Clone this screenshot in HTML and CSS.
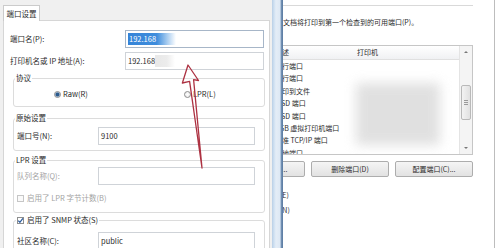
FILE: index.html
```html
<!DOCTYPE html>
<html lang="zh-CN">
<head>
<meta charset="utf-8">
<title>端口设置</title>
<link rel="stylesheet" href="styles.css">
</head>
<body>
<div class="desk">
  <section class="back">
    <div class="back-top"></div>
    <p class="back-desc">打印到下列端口。文档将打印到第一个检查到的可用端口(P)。</p>
    <div class="list">
      <div class="list-main">
        <div class="list-head"><span class="col1">描述</span><span class="col2">打印机</span></div>
        <div class="list-row"><span class="col1">串行端口</span></div>
        <div class="list-row"><span class="col1">串行端口</span></div>
        <div class="list-row"><span class="col1">打印到文件</span></div>
        <div class="list-row"><span class="col1">WSD 端口</span></div>
        <div class="list-row"><span class="col1">WSD 端口</span></div>
        <div class="list-row"><span class="col1">USB 虚拟打印机端口</span></div>
        <div class="list-row"><span class="col1">标准 TCP/IP 端口</span></div>
        <div class="list-row"><span class="col1">本地端口</span></div>
      </div>
      <div class="blurbox"></div>
      <div class="scroll">
        <div class="sb-btn"><span class="tri up"></span></div>
        <div class="sb-track"><div class="thumb"><i></i><i></i><i></i></div></div>
        <div class="sb-btn"><span class="tri down"></span></div>
      </div>
    </div>
    <div class="btns">
      <button class="btn">添加端口(T)...</button>
      <button class="btn">删除端口(D)</button>
      <button class="btn">配置端口(C)...</button>
    </div>
    <div class="opt"><span class="chk"></span><span>启用双向支持(E)</span></div>
    <div class="opt opt2"><span class="chk"></span><span>启用打印机池(N)</span></div>
  </section>

  <section class="dialog">
    <div class="dlg-body">
      <div class="tabs"><div class="tab">端口设置</div></div>
      <div class="page">
        <div class="row row-top">
          <span class="lbl">端口名(P):</span>
          <div class="inp inp-focus"><span class="sel">192.168</span></div>
        </div>
        <div class="row row-top">
          <span class="lbl">打印机名或 IP 地址(A):</span>
          <div class="inp"><span>192.168</span><span class="smudge"></span></div>
        </div>

        <fieldset class="grp g1">
          <legend>协议</legend>
          <div class="radios">
            <label class="rad rad-raw"><span class="radio on"></span>Raw(R)</label>
            <label class="rad"><span class="radio"></span>LPR(L)</label>
          </div>
        </fieldset>

        <fieldset class="grp g2">
          <legend>原始设置</legend>
          <div class="row">
            <span class="lbl2">端口号(N):</span>
            <div class="inp inp2">9100</div>
          </div>
        </fieldset>

        <fieldset class="grp g3">
          <legend>LPR 设置</legend>
          <div class="row">
            <span class="lbl2 dis">队列名称(Q):</span>
            <div class="inp inp2"></div>
          </div>
          <div class="chkrow dis"><span class="chk dis"></span>启用了 LPR 字节计数(B)</div>
        </fieldset>

        <fieldset class="grp g4">
          <legend class="leg-chk"><span class="chk on"><svg viewBox="0 0 7 7" width="7" height="7"><path d="M1.2 3.6 L2.9 5.3 L5.9 1.4" fill="none" stroke="#2b5c9e" stroke-width="1.3"/></svg></span>启用了 SNMP 状态(S)</legend>
          <div class="row">
            <span class="lbl2">社区名称(C):</span>
            <div class="inp inp2">public</div>
          </div>
        </fieldset>
      </div>
    </div>
    <div class="dlg-edge"></div>
  </section>

  <svg class="arrow" width="500" height="248" viewBox="0 0 500 248">
    <path d="M188 65 L198.5 80.5 L193.6 79.6 L202 168 L189.6 81.4 L182.4 83 Z" fill="rgba(255,255,255,0.15)" stroke="#ad3242" stroke-width="1.3" stroke-linejoin="round"/>
  </svg>
</div>
</body>
</html>
```
FILE: styles.css
```css
* { box-sizing: border-box; }
html, body { margin: 0; padding: 0; }
body {
  width: 500px; height: 248px; overflow: hidden; background: #fff;
  font-family: "Noto Sans CJK SC", "Liberation Sans", sans-serif;
  color: #2a2a2a;
}
.desk { position: relative; width: 500px; height: 248px; overflow: hidden; }

/* back window */
.back {
  position: absolute; left: 200px; top: 0; width: 295px; height: 248px;
  background: #fff; border-right: 1px solid #bdbdbd;
  font-size: 7px; line-height: 10px;
}
.back-top { height: 6px; border-bottom: 1px solid #d9d9d9; margin-right: 21px; }
.back-desc { margin: 11px 0 0 27px; white-space: nowrap; }
.list {
  position: relative; display: flex;
  margin: 18px 21px 0 71px; height: 110px;
  border: 1px solid #c6c6c6; overflow: hidden;
}
.list-main { flex: 1; overflow: hidden; }
.list-head {
  display: flex; height: 14px; line-height: 13px;
  border-bottom: 1px solid #e0e0e0;
  background: linear-gradient(#ffffff, #f0f1f3);
}
.col1 { width: 76px; padding-left: 3px; white-space: nowrap; flex: none; }
.col2 { flex: 1; padding-left: 9px; }
.list-row { display: flex; height: 12.4px; line-height: 12.4px; }
.blurbox {
  position: absolute; left: 84px; top: 37px; width: 84px; height: 62px;
  background: #d9d9d9; filter: blur(6px); opacity: 0.8;
}
.scroll {
  width: 13px; border-left: 1px solid #e4e4e4; background: #f4f4f4;
  display: flex; flex-direction: column;
}
.sb-btn { height: 12px; display: flex; align-items: center; justify-content: center; }
.tri { width: 0; height: 0; border-left: 2px solid transparent; border-right: 2px solid transparent; }
.tri.up { border-bottom: 2px solid #777; }
.tri.down { border-top: 2px solid #777; }
.sb-track { flex: 1; padding: 27px 1px 0 1px; }
.thumb {
  height: 35px; border: 1px solid #b9b9b9; border-radius: 2px;
  background: linear-gradient(90deg, #f3f3f3, #e1e1e1);
  display: flex; flex-direction: column; align-items: center; justify-content: center; gap: 1px;
}
.thumb i { display: block; width: 4px; height: 1px; background: #9a9a9a; }

.btns { display: flex; justify-content: flex-end; gap: 6px; margin: 6px 21px 0 0; }
.btn {
  width: 78px; height: 16px; padding: 0;
  border: 1px solid #adadad; border-radius: 2px;
  background: linear-gradient(#f5f5f5, #e2e2e2);
  font: inherit; color: #2a2a2a; line-height: 14px; text-align: center; white-space: nowrap;
}
.opt { display: flex; align-items: center; gap: 4px; height: 10px; margin: 13px 0 0 27px; white-space: nowrap; }
.opt2 { margin-top: 5px; }

/* front dialog */
.dialog {
  position: absolute; left: 0; top: 0; width: 283px; height: 248px;
  display: flex; z-index: 2;
  font-size: 7.5px; line-height: 10px;
}
.dlg-body {
  width: 272px; background: #f0f0f0;
  padding: 5px 2px 0 3px; display: flex; flex-direction: column;
}
.dlg-edge {
  width: 11px;
  background: linear-gradient(90deg, #b9cfe6 0, #cfe0f1 2px, #e4edf7 4px, #dde8f4 8px, #8aa6c6 9px, #56779d 10px, #6b8ab0 11px);
}
.tabs { display: flex; }
.tab {
  position: relative; z-index: 1;
  width: 37px; height: 16px; background: #fff;
  border: 1px solid #cbcbcb; border-bottom: none;
  text-align: center; line-height: 15px; white-space: nowrap;
}
.page {
  flex: 1; margin-top: -1px; background: #fff;
  border: 1px solid #d6d6d6; border-bottom: none;
  padding: 9px 4px 0 6px;
}
.row { display: flex; align-items: center; }
.row-top { height: 18px; }
.row-top + .row-top { margin-top: 4px; }
.lbl { width: 115px; white-space: nowrap; }
.inp {
  height: 18px; border: 1px solid #cfd3d8; background: #fff;
  display: flex; align-items: center; padding-left: 2px; white-space: nowrap;
}
.row-top .inp { width: 139px; }
.inp-focus { border-color: #a7b6c8; }
.sel {
  color: #fff; padding: 1px 20px 1px 1px;
  background: linear-gradient(90deg, #3584d8 0, #3e8ddd 60%, #a9cdf0 82%, rgba(220,236,250,0) 100%);
}
.smudge {
  display: block; width: 20px; height: 12px; margin-left: 0;
  background: linear-gradient(90deg, #e8e8e8, #ececec 60%, rgba(240,240,240,0));
}

.grp {
  margin: 0 0 0 3px; padding: 0; min-width: 0;
  border: 1px solid #dcdcdc; border-radius: 3px;
}
.grp legend { padding: 0 1px; margin-left: 1px; line-height: 10px; white-space: nowrap; }
.g1 { margin-top: 3px; }
.radios { display: flex; align-items: center; padding: 6px 0 7px 40px; height: 23px; }
.rad { display: flex; align-items: center; gap: 2px; white-space: nowrap; }
.rad-raw { width: 130px; }
.radio {
  width: 7px; height: 7px; border-radius: 50%; border: 1px solid #8c8c8c;
  background: radial-gradient(circle, #fff 0, #e6e6e6 100%);
}
.radio.on { background: radial-gradient(circle, #2c5a8c 0, #2c5a8c 1.4px, #98b2cf 2.2px, #f2f5f9 3px); }

.g2 { margin-top: 6px; }
.g2 .row { padding: 4px 0 5px 3px; }
.lbl2 { width: 81px; white-space: nowrap; }
.inp2 { width: 157px; }
.dis { color: #a3a3a3; }

.g3 { margin-top: 4px; padding-bottom: 9px; }
.g3 .row { padding: 2px 0 0 3px; }
.chkrow { display: flex; align-items: center; gap: 3px; margin: 8px 0 0 3px; height: 10px; white-space: nowrap; }
.chk {
  width: 7px; height: 7px; border: 1px solid #8e8f8f; background: #fff;
  display: inline-flex; align-items: center; justify-content: center; flex: none;
}
.chk.dis { border-color: #c6c6c6; background: #fafafa; }
.chk.on svg { display: block; margin: -1px; }

.g4 { margin-top: 2px; }
.leg-chk { display: flex; align-items: center; gap: 3px; }
.grp .leg-chk { margin-left: 2px; }
.g4 .row { padding: 7px 0 0 3px; }

.arrow { position: absolute; left: 0; top: 0; z-index: 5; pointer-events: none; }
```
